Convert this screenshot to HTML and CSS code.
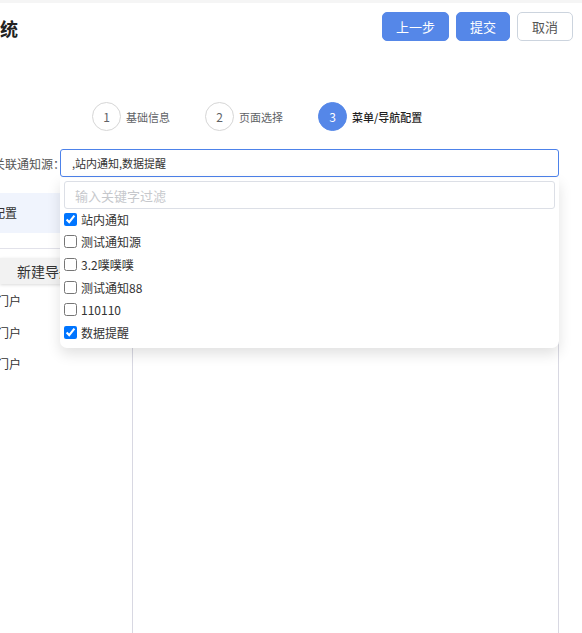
FILE: index.html
```html
<!DOCTYPE html>
<html lang="zh-CN">
<head>
<meta charset="utf-8">
<title>菜单/导航配置</title>
<link rel="stylesheet" href="styles.css">
</head>
<body>
<div class="top-strip"></div>
<header class="header">
  <h1 class="title">统</h1>
  <div class="actions">
    <button class="btn btn-primary">上一步</button>
    <button class="btn btn-primary">提交</button>
    <button class="btn btn-default">取消</button>
  </div>
</header>

<div class="steps">
  <div class="step">
    <span class="step-num">1</span>
    <span class="step-label">基础信息</span>
  </div>
  <div class="step">
    <span class="step-num">2</span>
    <span class="step-label">页面选择</span>
  </div>
  <div class="step step-active">
    <span class="step-num">3</span>
    <span class="step-label">菜单/导航配置</span>
  </div>
</div>

<div class="form-row">
  <label class="form-label">关联通知源：</label>
  <div class="select">
    <div class="select-input">,站内通知,数据提醒</div>
    <div class="dropdown">
      <input class="filter" type="text" placeholder="输入关键字过滤">
      <ul class="options">
        <li class="option"><input type="checkbox" checked><span>站内通知</span></li>
        <li class="option"><input type="checkbox"><span>测试通知源</span></li>
        <li class="option"><input type="checkbox"><span>3.2噗噗噗</span></li>
        <li class="option"><input type="checkbox"><span>测试通知88</span></li>
        <li class="option"><input type="checkbox"><span>110110</span></li>
        <li class="option"><input type="checkbox" checked><span>数据提醒</span></li>
      </ul>
    </div>
  </div>
</div>

<div class="panels">
  <aside class="side">
    <div class="side-tab"><span class="clip-30">导航配置</span></div>
    <div class="side-divider"></div>
    <button class="side-btn">新建导航</button>
    <ul class="side-list">
      <li class="side-item"><span class="clip-3">门户</span></li>
      <li class="side-item"><span class="clip-3">门户</span></li>
      <li class="side-item"><span class="clip-3">门户</span></li>
    </ul>
  </aside>
  <section class="main"></section>
</div>
</body>
</html>
```
FILE: styles.css
```css
* { box-sizing: border-box; }
html, body { margin: 0; padding: 0; }
body {
  font-family: "Noto Sans CJK SC", "Noto Sans", sans-serif;
  color: #333;
  background: #fff;
  width: 582px;
  height: 633px;
  overflow: hidden;
  display: flex;
  flex-direction: column;
}
.top-strip { height: 3px; background: #f5f5f5; flex: none; }

.header {
  display: flex;
  justify-content: space-between;
  align-items: flex-start;
  padding: 9px 9px 0 0;
  flex: none;
}
.title {
  margin: 0;
  font-size: 18px;
  font-weight: 600;
  line-height: 25px;
  padding-top: 4px;
  color: #222;
}
.actions { display: flex; gap: 7px; }
.btn {
  height: 29px;
  padding: 0 13px;
  font-family: inherit;
  font-size: 13px;
  border-radius: 5px;
  border: 1px solid transparent;
  cursor: pointer;
  line-height: 1;
}
.btn-primary { background: #5587e8; color: #fff; border-color: #5587e8; }
.btn-default { background: #fff; color: #555; border-color: #ccd4de; padding: 0 14px; }

.steps {
  display: flex;
  gap: 35px;
  padding-left: 92px;
  margin-top: 61px;
  flex: none;
}
.step { display: flex; align-items: center; }
.step-num {
  width: 29px;
  height: 29px;
  border-radius: 50%;
  border: 1px solid #d6d6d6;
  display: flex;
  align-items: center;
  justify-content: center;
  font-size: 12px;
  color: #606266;
}
.step-label { margin-left: 5px; font-size: 11px; color: #606266; }
.step-active .step-num { background: #5587e8; border-color: #5587e8; color: #fff; }
.step-active .step-label { color: #1f1f1f; font-weight: 500; }

.form-row {
  display: flex;
  align-items: center;
  margin-top: 18px;
  flex: none;
}
.form-label {
  width: 72px;
  margin-left: -7px;
  margin-right: -5px;
  font-size: 12px;
  color: #555;
  white-space: nowrap;
}
.select { position: relative; width: 499px; }
.select-input {
  height: 28px;
  border: 1px solid #4d82ea;
  border-radius: 3px;
  padding: 0 11px;
  font-size: 11px;
  line-height: 26px;
  color: #333;
}
.dropdown {
  position: absolute;
  top: 29px;
  left: 0;
  right: 0;
  z-index: 10;
  background: #fff;
  border-radius: 0 0 7px 7px;
  box-shadow: 0 6px 14px rgba(0, 0, 0, 0.12);
  padding: 3px 4px 4px;
}
.filter {
  display: block;
  width: 100%;
  height: 28px;
  border: 1px solid #dcdfe6;
  border-radius: 3px;
  padding: 0 10px;
  font-family: inherit;
  font-size: 13px;
  outline: none;
}
.filter::placeholder { color: #c6c8cc; }
.options { list-style: none; margin: -1px 0 0; padding: 0; }
.option {
  display: flex;
  align-items: center;
  gap: 4px;
  height: 22.6px;
  font-size: 12px;
  color: #333;
}
.option input { margin: 0; width: 13px; height: 13px; }

.panels {
  flex: 1;
  display: flex;
  margin-top: 8px;
}
.side {
  width: 133px;
  border-right: 1px solid #d8d8e2;
  padding-top: 8px;
  overflow: hidden;
}
.side-tab {
  height: 40px;
  background: #f0f4fd;
  font-size: 12px;
  line-height: 40px;
  white-space: nowrap;
}
.clip-30 { margin-left: -31px; }
.clip-3 { margin-left: -3px; }
.side-divider { height: 1px; background: #e2e2ea; margin-top: 15px; }
.side-btn {
  display: block;
  width: 118px;
  height: 26px;
  margin-top: 9px;
  border: none;
  background: #f2f2f2;
  box-shadow: 0 1px 3px rgba(0, 0, 0, 0.15);
  font-family: inherit;
  font-size: 14px;
  color: #333;
  text-align: left;
  padding-left: 17px;
}
.side-list { list-style: none; margin: 1px 0 0; padding: 0; }
.side-item {
  height: 31.5px;
  line-height: 31.5px;
  font-size: 12px;
  white-space: nowrap;
}
.main {
  width: 426px;
  border-right: 1px solid #d8d8e2;
}
```
